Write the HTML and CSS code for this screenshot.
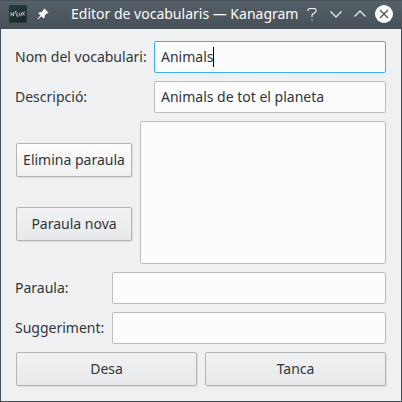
FILE: index.html
```html
<!DOCTYPE html>
<html lang="ca">
<head>
<meta charset="utf-8">
<title>Editor de vocabularis — Kanagram</title>
<link rel="stylesheet" href="styles.css">
</head>
<body>
<div class="window">
  <header class="titlebar">
    <svg class="app-icon" width="18" height="18" viewBox="0 0 18 18">
      <defs><linearGradient id="g" x1="0" y1="0" x2="0.6" y2="1"><stop offset="0" stop-color="#26403f"/><stop offset="1" stop-color="#1b2828"/></linearGradient></defs>
      <rect width="18" height="18" rx="1" fill="#2b3638"/>
      <rect x="1" y="1" width="16" height="16" fill="url(#g)"/>
      <g fill="none" stroke="#c8d0d0" stroke-width="0.9">
        <path d="M2.1 11.3V7.6L4.6 10.8V7.2"/><path d="M5.9 6.6h1.3L6.1 8.6"/><path d="M7.9 7.6V11.1H9.7"/><path d="M10.4 7.8V10.2Q11.4 11.2 12.4 10.2V7.6"/><path d="M13.1 7 15.9 10.4M15.6 6.6 13.4 10.6"/>
      </g>
    </svg>
    <svg class="pin" width="12" height="12" viewBox="0 0 12 12"><path fill="#fcfcfc" d="M7.3 0.5 11.6 4.7 10.6 5.6 9.8 5.3 7.7 7.6 7.6 9.7 6.5 10.4 4.4 8.3 0.8 11.5 0.3 11.1 3.5 7.4 1.4 5.3 2.2 4.3 4.3 4.2 6.6 2.1 6.3 1.4Z"/></svg>
    <h1 class="title">Editor de vocabularis — Kanagram</h1>
    <div class="controls">
      <svg width="18" height="18" viewBox="0 0 18 18"><path class="line" d="M5 6V5.3Q5 3.5 7 3.5H11Q13 3.5 13 5.4Q13 7 11.8 7.8L9.9 9Q9 9.6 9 10.5V12"/><path class="dot" d="M8.2 14h1.6v1.5H8.2z"/></svg>
      <svg width="18" height="18" viewBox="0 0 18 18"><path class="line" d="M3.5 6.5 9 12 14.5 6.5"/></svg>
      <svg width="18" height="18" viewBox="0 0 18 18"><path class="line" d="M3.5 11.5 9 6 14.5 11.5"/></svg>
      <svg width="18" height="18" viewBox="0 0 18 18"><circle cx="9" cy="9" r="9" fill="#fcfcfc"/><path class="cross" d="M5 5 13 13M13 5 5 13"/></svg>
    </div>
  </header>
  <main class="form">
    <div class="row wide"><label>Nom del vocabulari:</label><div class="field focused"><span>Animals</span><i class="caret"></i></div></div>
    <div class="row wide"><label>Descripció:</label><div class="field">Animals de tot el planeta</div></div>
    <div class="words">
      <div class="actions"><button class="button hot">Elimina paraula</button><button class="button">Paraula nova</button></div>
      <div class="list"></div>
    </div>
    <div class="row"><label>Paraula:</label><div class="field"></div></div>
    <div class="row"><label>Suggeriment:</label><div class="field"></div></div>
    <div class="footer"><button class="button">Desa</button><button class="button">Tanca</button></div>
  </main>
</div>
</body>
</html>
```
FILE: styles.css
```css
* { box-sizing: border-box; }
body { margin: 0; font: 14px/20px "Noto Sans", sans-serif; color: #31363b; }
.window { width: 402px; height: 402px; display: flex; flex-direction: column; background: #eff0f1; border: solid #475057; border-width: 0 1px 1px; }
.titlebar { height: 29px; flex: none; margin: 0 -1px; padding: 0 9px 1px; display: flex; align-items: center; background: linear-gradient(#566068, #475057); box-shadow: inset 0 1px #4b555c; }
.pin { margin-left: 10px; }
.title { margin: 0 0 0 22px; font-size: 14px; font-weight: 400; color: #fcfcfc; white-space: nowrap; flex: 1; width: 0; }
.controls { display: flex; gap: 6px; }
.line { fill: none; stroke: #fcfcfc; stroke-width: 1.1; }
.dot { fill: #aab0b4; }
.cross { fill: none; stroke: #475057; stroke-width: 1.2; }
.form { flex: 1; padding: 12px 15px 15px 14px; display: flex; flex-direction: column; gap: 8px; }
.row { display: grid; grid-template-columns: 97px 1fr; height: 32px; align-items: center; white-space: nowrap; }
.row.wide { grid-template-columns: 139px 1fr; }
.field, .list { background: #fcfcfc; border: 1px solid #babcbe; border-radius: 2px; }
.field { height: 32px; padding: 5px 6px; display: flex; }
.focused { border-color: #3daee9; }
.caret { width: 1px; height: 20px; background: #000; }
.words { display: flex; gap: 8px; height: 143px; padding-left: 1px; }
.actions { width: 116px; padding-top: 22px; display: flex; flex-direction: column; gap: 30px; }
.list { flex: 1; }
.button { height: 34px; margin: 0; padding: 0; font: inherit; color: inherit; white-space: nowrap; background: linear-gradient(#f1f2f3, #e7e8ea); border: 1px solid #b3b5b7; border-radius: 2px; box-shadow: 1px 1px 0 #dcdddf; }
.hot { background: linear-gradient(#fcfcfc, #f0f0f0); }
.footer { display: grid; grid-template-columns: 1fr 1fr; gap: 8px; padding-left: 1px; }
```
